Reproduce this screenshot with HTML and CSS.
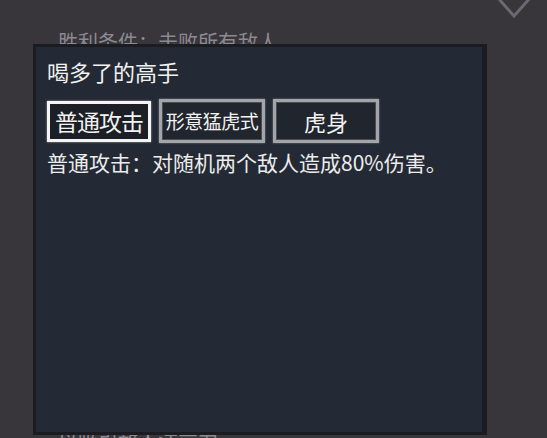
FILE: index.html
```html
<!DOCTYPE html>
<html lang="zh-CN">
<head>
<meta charset="utf-8">
<title>喝多了的高手</title>
<link rel="stylesheet" href="styles.css">
</head>
<body>
<div class="scene">
  <div class="bg-header">
    <svg class="chevron" width="40" height="20" viewBox="0 0 40 20">
      <polyline points="2,-2 18,16 34,-2" fill="none" stroke="#6a6870" stroke-width="3"/>
    </svg>
  </div>
  <div class="bg-goal">胜利条件：击败所有敌人</div>
  <div class="bg-spacer"></div>
  <div class="bg-divider"></div>
  <div class="bg-note">以吸引敌人注意力</div>

  <div class="panel">
    <div class="panel-title">喝多了的高手</div>
    <div class="skills">
      <div class="skill skill-active">普通攻击</div>
      <div class="skill skill-small">形意猛虎式</div>
      <div class="skill">虎身</div>
    </div>
    <div class="skill-desc">普通攻击：对随机两个敌人造成80%伤害。</div>
  </div>
</div>
</body>
</html>
```

FILE: styles.css
```css
html, body {
  margin: 0;
  padding: 0;
}
body {
  background: #38353b;
  font-family: "Noto Sans CJK SC", "Noto Sans", sans-serif;
  width: 547px;
  height: 438px;
  overflow: hidden;
}
.scene {
  position: relative;
  width: 547px;
  height: 438px;
  display: flex;
  flex-direction: column;
}
.bg-header {
  height: 20px;
  display: flex;
  justify-content: flex-end;
  padding-right: 11px;
}
.chevron {
  display: block;
}
.bg-goal {
  margin-top: 8px;
  margin-left: 58px;
  font-size: 20px;
  line-height: 28px;
  color: #8c8a91;
}
.bg-spacer {
  flex: 0 0 337px;
}
.bg-divider {
  height: 2px;
  margin: 0 37px 0 10px;
  background: #29272c;
}
.bg-note {
  margin-top: 33px;
  margin-left: 58px;
  font-size: 20px;
  line-height: 28px;
  color: #8c8a91;
}
.panel {
  position: absolute;
  left: 33px;
  top: 44px;
  width: 454px;
  height: 391px;
  box-sizing: border-box;
  background: #242a35;
  border: 3px solid #1a1c22;
  border-right-width: 5px;
  padding: 11px 11px;
  color: #f2f2f2;
}
.panel-title {
  font-size: 22px;
  line-height: 26px;
}
.skills {
  margin-top: 15px;
  display: flex;
  align-items: center;
  gap: 8px;
}
.skill {
  box-sizing: border-box;
  width: 106px;
  height: 44px;
  display: flex;
  align-items: center;
  justify-content: center;
  background: #20252e;
  border: 3px solid #a3a5a9;
  box-shadow: inset 0 0 0 1px #4b4e55, 0 0 2px rgba(200, 200, 205, 0.5);
  font-size: 22px;
  line-height: 26px;
  color: #f2f2f2;
}
.skill-active {
  width: 104px;
  height: 41px;
  background: #1c1f26;
  border-color: #f4f4f4;
  box-shadow: 0 0 2px rgba(255, 255, 255, 0.6);
  font-size: 23px;
  letter-spacing: -1px;
}
.skill-small {
  font-size: 19px;
  letter-spacing: -0.5px;
}
.skill-desc {
  margin-top: 7px;
  font-size: 21px;
  line-height: 25px;
  color: #ececec;
}
```
